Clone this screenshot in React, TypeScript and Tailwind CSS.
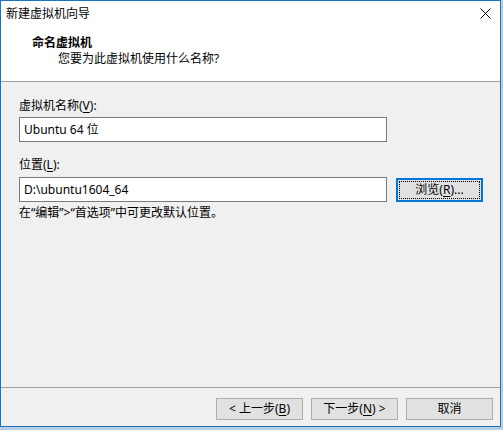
export default function App() {
  return (
    <div className="w-[503px] h-[430px] bg-[#b6cddf] font-['Noto_Sans','Noto_Sans_CJK_SC',sans-serif] text-[12px] leading-[16px] text-black">
      <div className="w-[501px] h-[427px] border border-[#1c75bc] bg-[#f0f0f0] flex flex-col">
        {/* title bar + page header */}
        <div className="h-[81px] bg-white border-b border-[#a0a0a0]">
          <div className="h-[30px] flex items-start justify-between pl-[5px] pr-[9px]">
            <span className="pt-[5px]">新建虚拟机向导</span>
            <svg width="11" height="11" viewBox="0 0 11 11" className="mt-[7px]">
              <path d="M0.5 0.5 L10.5 10.5 M10.5 0.5 L0.5 10.5" stroke="#000" strokeWidth="1" />
            </svg>
          </div>
          <div className="mt-[4px] pl-[31px] font-bold">命名虚拟机</div>
          <div className="pl-[57px]">您要为此虚拟机使用什么名称?</div>
        </div>

        {/* form */}
        <div className="flex-1 pl-[18px]">
          <div className="mt-[16px]">
            虚拟机名称(<span className="underline underline-offset-2">V</span>):
          </div>
          <div className="mt-[3px] w-[368px] h-[25px] border border-[#7a7a7a] bg-white px-[4px] flex items-center">
            Ubuntu 64 位
          </div>
          <div className="mt-[15px]">
            位置(<span className="underline underline-offset-2">L</span>):
          </div>
          <div className="mt-[4px] flex items-start">
            <div className="w-[368px] h-[25px] border border-[#7a7a7a] bg-white px-[4px] flex items-center">
              D:\ubuntu1604_64
            </div>
            <button className="ml-[9px] mt-[1px] w-[87px] h-[24px] border-2 border-[#0078d7] bg-[#e1e1e1] outline-1 outline-dotted outline-black outline-offset-[-4px] flex items-center justify-center">
              浏览(<span className="underline underline-offset-2">R</span>)...
            </button>
          </div>
          <div className="mt-[3px]">在“编辑”&gt;“首选项”中可更改默认位置。</div>
        </div>

        {/* footer buttons */}
        <div className="border-t border-[#a0a0a0] pt-[10px] pb-[6px] pr-[7px] flex justify-end gap-[8px]">
          <button className="w-[87px] h-[22px] border border-[#adadad] bg-[#e1e1e1] flex items-center justify-center">
            &lt; 上一步(<span className="underline underline-offset-2">B</span>)
          </button>
          <button className="w-[87px] h-[22px] border border-[#adadad] bg-[#e1e1e1] flex items-center justify-center">
            下一步(<span className="underline underline-offset-2">N</span>) &gt;
          </button>
          <button className="w-[87px] h-[22px] border border-[#adadad] bg-[#e1e1e1] flex items-center justify-center">
            取消
          </button>
        </div>
      </div>
    </div>
  );
}
